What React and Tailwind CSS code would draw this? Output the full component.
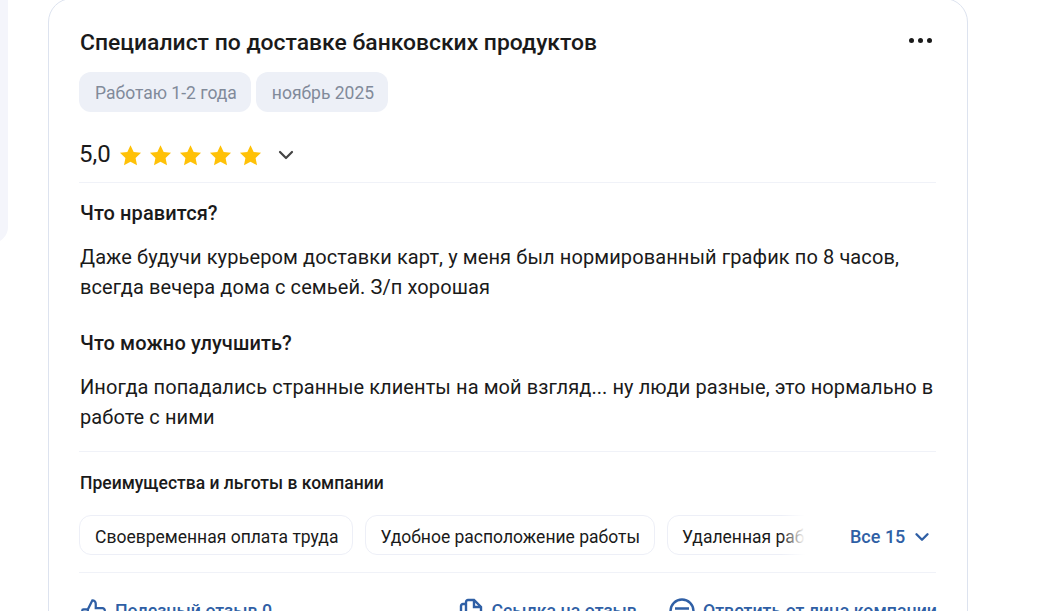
import React from "react";
import { ChevronDown } from "lucide-react";

const font = "font-['Roboto','Noto_Sans',sans-serif]";

const Star = () => (
  <svg width="23" height="23" viewBox="0 0 24 24" className="shrink-0">
    <path fill="#FFC107" d="M12 1.2l3.3 7.1 7.7.9-5.7 5.3 1.5 7.7L12 18.4l-6.8 3.8 1.5-7.7L1 9.2l7.7-.9z" />
  </svg>
);

const Tag = ({ children }) => (
  <span className="h-10 pl-4 pr-[14px] pt-0.5 flex items-center rounded-xl bg-[#edf0f7] text-[#818a9a] text-[17.5px]">{children}</span>
);

const Chip = ({ children, first }) => (
  <span className={`h-10 ${first ? "pl-[15px]" : "pl-[14px]"} pr-[14px] pt-1 flex items-center shrink-0 rounded-xl border border-[#edeff7] bg-white text-[#1a1a1a] text-[17.5px] whitespace-nowrap`}>
    {children}
  </span>
);

export default function App() {
  return (
    <div className={`${font} h-screen overflow-hidden bg-white flex items-start`}>
      {/* левая панель */}
      <div className="w-6 -ml-4 h-[243px] shrink-0 bg-[#f4f5fb] rounded-br-2xl"></div>

      <div className="w-[920px] ml-10 -mt-0.5 shrink-0 border border-[#dde3ef] rounded-3xl pl-[30px] pr-[31px] pt-[29px] pb-6 text-[#1a1a1a]">
        <div className="flex justify-between items-start">
          <h1 className="ml-px text-[22.9px] leading-[30px] font-medium">Специалист по доставке банковских продуктов</h1>
          <div className="flex gap-1 mt-2.5 mr-1">
            <span className="w-[5px] h-[5px] rounded-full bg-[#1a1a1a]"></span>
            <span className="w-[5px] h-[5px] rounded-full bg-[#1a1a1a]"></span>
            <span className="w-[5px] h-[5px] rounded-full bg-[#1a1a1a]"></span>
          </div>
        </div>

        <div className="flex gap-[5px] mt-[14px]">
          <Tag>Работаю 1-2 года</Tag>
          <Tag>ноябрь 2025</Tag>
        </div>

        <div className="flex items-center mt-[26px] pb-3 border-b border-[#f0f2f8]">
          <span className="text-2xl leading-[32px]">5,0</span>
          <div className="flex gap-[7px] ml-2 mt-0.5">
            <Star />
            <Star />
            <Star />
            <Star />
            <Star />
          </div>
          <ChevronDown size={24} strokeWidth={2.2} className="ml-3 mt-0.5 text-[#444]" />
        </div>

        <h2 className="ml-px text-[20px] leading-[30px] font-medium mt-[15px] tracking-[0.1px]">Что нравится?</h2>
        <p className="ml-px text-[20px] leading-[30px] mt-[14px] tracking-[0.1px]">
          Даже будучи курьером доставки карт, у меня был нормированный график по 8 часов,
          <br />
          всегда вечера дома с семьей. З/п хорошая
        </p>

        <h2 className="ml-px text-[20px] leading-[30px] font-medium mt-[26px] tracking-[0.1px]">Что можно улучшить?</h2>
        <p className="ml-px text-[20px] leading-[30px] mt-[14px] whitespace-nowrap tracking-[0.08px]">
          Иногда попадались странные клиенты на мой взгляд... ну люди разные, это нормально в
          <br />
          работе с ними
        </p>

        <div className="mt-[19px] pt-5 border-t border-[#f0f2f8]">
          <h3 className="ml-px text-[17.5px] leading-[22px] font-medium">Преимущества и льготы в компании</h3>
          <div className="flex items-center mt-[21px]">
            <div className="relative w-[726px] overflow-hidden flex gap-3">
              <Chip first>Своевременная оплата труда</Chip>
              <Chip>Удобное расположение работы</Chip>
              <Chip>Удаленная работа</Chip>
              <div className="absolute right-0 top-0 bottom-0 w-6 bg-gradient-to-r from-white/0 to-white"></div>
            </div>
            <span className="ml-[45px] pt-1 text-lg font-medium text-[#2f5fa5]">Все 15</span>
            <ChevronDown size={22} strokeWidth={2.6} className="ml-1.5 mt-1 text-[#2f5fa5]" />
          </div>
        </div>

        <div className="mt-[17px] pt-[23px] border-t border-[#f0f2f8] flex justify-between text-[17.8px] text-[#2f5fa5] font-medium leading-[30px]">
          <div className="flex items-center gap-2 ml-px">
            <svg width="27" height="27" viewBox="0 0 24 24" fill="none" stroke="#2f5fa5" strokeWidth="2">
              <path d="M7 10v11H3a1 1 0 0 1-1-1v-9a1 1 0 0 1 1-1h4l4-8a3 3 0 0 1 3 3v4h6a2 2 0 0 1 2 2.3l-1.4 7A2 2 0 0 1 18.6 21H7" />
            </svg>
            <span>Полезный отзыв 0</span>
          </div>
          <div className="flex items-center -mr-px">
            <div className="flex items-center gap-2">
              <svg width="24" height="27" viewBox="0 0 24 27" fill="none" stroke="#2f5fa5" strokeWidth="2.4">
                <path d="M7 6V4a2 2 0 0 1 2-2h6l7 7v10a2 2 0 0 1-2 2H9a2 2 0 0 1-2-2V6H4a2 2 0 0 0-2 2v14a3 3 0 0 0 3 3h10" />
                <path d="M15 2v7h7" />
              </svg>
              <span>Ссылка на отзыв</span>
            </div>
            <div className="flex items-center gap-2 ml-8">
              <svg width="26" height="26" viewBox="0 0 26 26" fill="none" stroke="#2f5fa5" strokeWidth="2.4">
                <circle cx="13" cy="13" r="11.5" />
                <path d="M6 10.5h14M6 15.5h14" />
              </svg>
              <span>Ответить от лица компании</span>
            </div>
          </div>
        </div>
      </div>
    </div>
  );
}
